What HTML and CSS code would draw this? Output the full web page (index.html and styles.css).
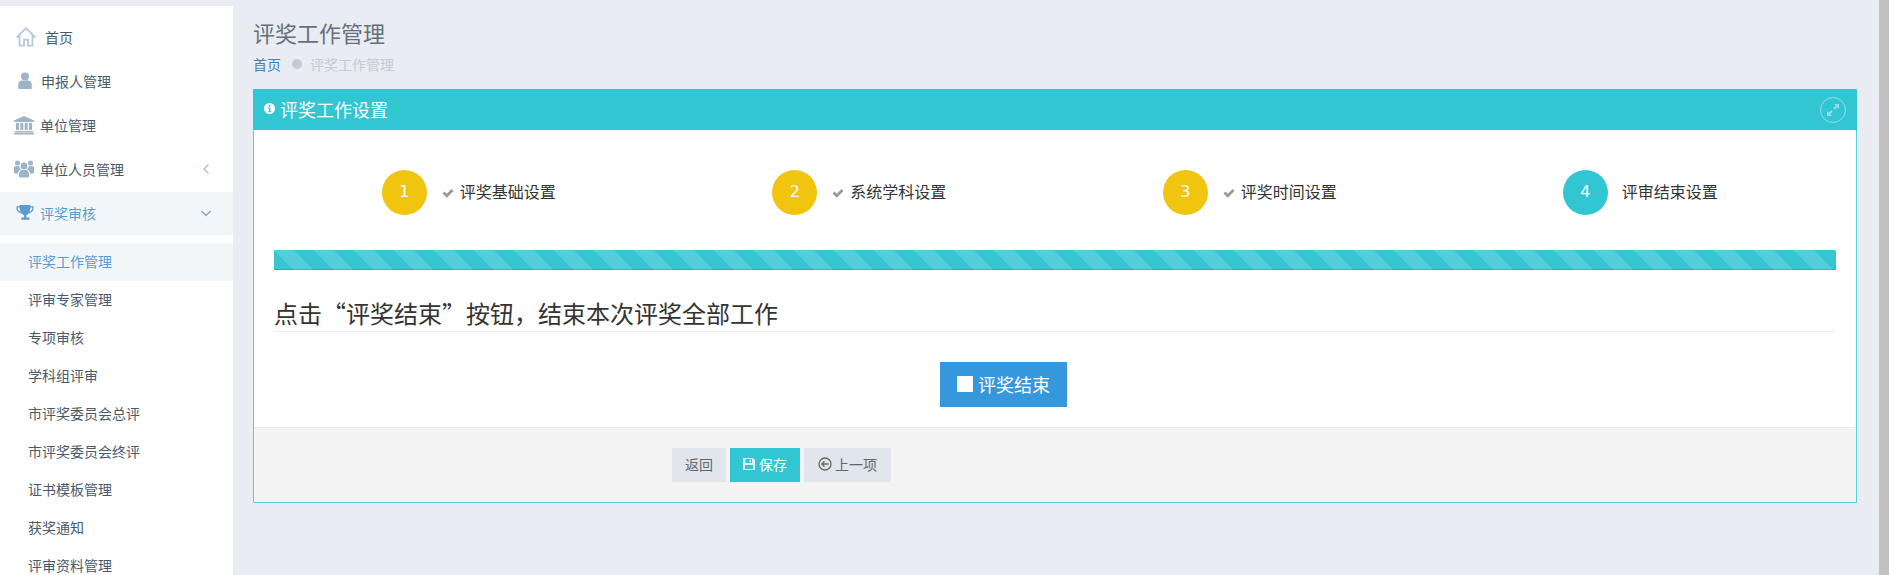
FILE: index.html
```html
<!DOCTYPE html>
<html lang="zh-CN">
<head>
    <meta charset="UTF-8">
    <title>评奖工作管理</title>
    <link rel="stylesheet" href="styles.css">
</head>
<body>
<div class="page">
    <aside class="sidebar">
        <a class="nav-item nav-home">
            <svg class="nav-icon" viewBox="0 0 20 20"><path d="M.7 10.500 10 1.200l9.300 9.300M3.500 8.500V18.700h4.500v-6h4v6h4.500V8.500" fill="none" stroke="#b4c9de" stroke-width="1.800"/></svg>
            <span>首页</span>
        </a>
        <a class="nav-item">
            <svg class="nav-icon icon-user" viewBox="0 0 20 20"><circle cx="10" cy="5" r="4.500" fill="#9db3c8"/><path d="M2.500 18v-4c0-3 2-4.500 4-4.500h7c2 0 4 1.500 4 4.500v4c0 .5-.5 1-1 1h-13c-.5 0-1-.5-1-1z" fill="#9db3c8"/></svg>
            <span>申报人管理</span>
        </a>
        <a class="nav-item">
            <svg class="nav-icon" viewBox="0 0 20 20"><path d="M10 1 0 5.500V7h20V5.500zM2 8h3v7H2zM6.300 8h3v7h-3zM10.700 8h3v7h-3zM15 8h3v7h-3zM1 16h18v1.500H1zM0 18h20v1.500H0z" fill="#9db3c8"/></svg>
            <span>单位管理</span>
        </a>
        <a class="nav-item">
            <svg class="nav-icon" viewBox="0 0 20 20"><circle cx="3.500" cy="4" r="2.500" fill="#9db3c8"/><circle cx="16.500" cy="4" r="2.500" fill="#9db3c8"/><circle cx="10" cy="7" r="3.500" fill="#9db3c8"/><path d="M0 8.500c0-1 1-1.500 2-1.500h3c.3 1.500 1 2.500 2 3.500-1.500.5-3 2-3 4H1c-.5 0-1-.5-1-1zM20 8.500c0-1-1-1.500-2-1.500h-3c-.3 1.500-1 2.500-2 3.500 1.500.5 3 2 3 4h3c.5 0 1-.5 1-1zM5 15c0-2 1.500-4 3-4h4c1.500 0 3 2 3 4v2c0 1-.5 1.500-1.500 1.500h-7C5.500 18.500 5 18 5 17z" fill="#9db3c8"/></svg>
            <span>单位人员管理</span>
            <svg class="nav-arrow" viewBox="0 0 14 14"><path d="M9.500 2.500 5 7l4.500 4.500" fill="none" stroke="#a7bdd2" stroke-width="1.300"/></svg>
        </a>
        <a class="nav-item active">
            <svg class="nav-icon icon-trophy" viewBox="0 0 20 20"><path d="M4 1h12v1.500h3.500V5c0 2.500-2.500 5-5.500 5.500-.7 1-1.500 1.500-2.500 2V15h2c1 0 1.500.7 1.500 1.500v1h-9v-1C5.500 15.700 6 15 7 15h2v-2.500c-1-.5-1.800-1-2.500-2C3 10 .5 7.500.5 5V2.500H4zM2 4v1c0 1.500 1.300 3 3 3.700C4.400 7.300 4 5.700 4 4zM18 4h-2c0 1.700-.4 3.300-1 4.700 1.700-.7 3-2.200 3-3.700z" fill="#5b9bd1"/></svg>
            <span>评奖审核</span>
            <svg class="nav-arrow" viewBox="0 0 14 14"><path d="M2.500 5 7 9.500 11.500 5" fill="none" stroke="#7ba7d0" stroke-width="1.300"/></svg>
        </a>
        <ul class="sub-nav">
            <li class="current">评奖工作管理</li>
            <li>评审专家管理</li>
            <li>专项审核</li>
            <li>学科组评审</li>
            <li>市评奖委员会总评</li>
            <li>市评奖委员会终评</li>
            <li>证书模板管理</li>
            <li>获奖通知</li>
            <li>评审资料管理</li>
        </ul>
    </aside>

    <main class="content">
        <h1 class="page-title">评奖工作管理</h1>
        <div class="breadcrumb">
            <a>首页</a>
            <i class="crumb-dot"></i>
            <span>评奖工作管理</span>
        </div>

        <section class="portlet">
            <header class="portlet-head">
                <div class="portlet-title">
                    <svg class="info-icon" viewBox="0 0 12 12"><circle cx="6" cy="6" r="6" fill="#fff"/><path d="M5 2h2v2H5zM4.500 5h2.500v4h1v1H4.500V9h1V6h-1z" fill="#32c5d2"/></svg>
                    <span>评奖工作设置</span>
                </div>
                <a class="expand-btn">
                    <svg viewBox="0 0 14 14"><path d="M8 1h5v5l-1.800-1.800-2.500 2.500-1.400-1.400 2.500-2.500zM6 13H1V8l1.800 1.800 2.500-2.500 1.400 1.400-2.500 2.500z" fill="#8fe0e8"/></svg>
                </a>
            </header>

            <div class="portlet-body">
                <div class="steps">
                    <div class="step">
                        <div class="step-num done">1</div>
                        <svg class="step-check" viewBox="0 0 12 12"><path d="M.5 6.500 2.500 4.500l2.300 2.300L9.500 2l2 2-6.700 6.700z" fill="#999"/></svg>
                        <span class="step-text">评奖基础设置</span>
                    </div>
                    <div class="step">
                        <div class="step-num done">2</div>
                        <svg class="step-check" viewBox="0 0 12 12"><path d="M.5 6.500 2.500 4.500l2.300 2.300L9.500 2l2 2-6.700 6.700z" fill="#999"/></svg>
                        <span class="step-text">系统学科设置</span>
                    </div>
                    <div class="step">
                        <div class="step-num done">3</div>
                        <svg class="step-check" viewBox="0 0 12 12"><path d="M.5 6.500 2.500 4.500l2.300 2.300L9.500 2l2 2-6.700 6.700z" fill="#999"/></svg>
                        <span class="step-text">评奖时间设置</span>
                    </div>
                    <div class="step">
                        <div class="step-num">4</div>
                        <span class="step-text step-label">评审结束设置</span>
                    </div>
                </div>

                <div class="progress"></div>

                <h3 class="block-title">点击“评奖结束”按钮，结束本次评奖全部工作</h3>

                <div class="finish-row">
                    <button class="btn-finish"><i class="stop-icon"></i>评奖结束</button>
                </div>
            </div>

            <footer class="portlet-foot">
                <button class="btn">返回</button>
                <button class="btn btn-save">
                    <svg class="btn-icon" viewBox="0 0 14 14"><path fill-rule="evenodd" d="M1 1h10l2 2v10H1zM3.500 2v4h6.500V2zM3 8v4h8V8z" fill="#d8f4f6"/><path d="M7.500 2.800h1.500v2.400H7.500z" fill="#d8f4f6"/></svg>
                    保存
                </button>
                <button class="btn btn-prev">
                    <svg class="btn-icon" viewBox="0 0 14 14"><circle cx="7" cy="7" r="6" fill="none" stroke="#666" stroke-width="1.300"/><path d="M10.500 7H4M6.500 4.300 3.800 7l2.700 2.700" fill="none" stroke="#666" stroke-width="1.300"/></svg>
                    上一项
                </button>
            </footer>
        </section>
    </main>

    <div class="scrollbar"></div>
</div>
</body>
</html>
```

FILE: styles.css
```css
* {
    box-sizing: border-box;
}

html, body {
    height: 100%;
    margin: 0;
    overflow: hidden;
}

body {
    background: #e9ecf3;
    font-family: "Noto Sans CJK SC", "Open Sans", sans-serif;
    font-size: 14px;
    color: #333;
}

.page {
    display: flex;
    height: 575px;
}

/* sidebar */
.sidebar {
    width: 233px;
    flex-shrink: 0;
    margin-top: 6px;
    padding-top: 10px;
    background: #fff;
    overflow: hidden;
}

.nav-item {
    display: flex;
    align-items: center;
    height: 44px;
    padding: 0 20px 2px 14px;
    color: #485a6a;
    line-height: 20px;
}

.nav-icon {
    width: 20px;
    height: 20px;
    margin-right: 6px;
    flex-shrink: 0;
}

.nav-home .nav-icon {
    margin: 0 9px 0 2px;
}

.nav-icon.icon-user {
    width: 18px;
    height: 18px;
    margin: 0 7px 0 2px;
}

.nav-icon.icon-trophy {
    width: 18px;
    height: 18px;
    margin: 0 6px 0 2px;
}

.nav-arrow {
    width: 14px;
    height: 14px;
    margin-left: auto;
}

.nav-item.active {
    height: 43px;
    background: #f2f6f9;
    color: #5b9bd1;
}

.sub-nav {
    list-style: none;
    margin: 8px 0 0;
    padding: 0;
}

.sub-nav li {
    height: 38px;
    padding-left: 28px;
    line-height: 36px;
    color: #485a6a;
}

.sub-nav li.current {
    background: #f2f6f9;
    color: #5b9bd1;
}

/* main area */
.content {
    flex: 1;
    min-width: 0;
    padding: 0 22px 0 20px;
}

.page-title {
    margin: 0;
    padding-top: 17px;
    font-size: 22px;
    font-weight: 400;
    line-height: 30px;
    color: #666f7a;
}

.breadcrumb {
    display: flex;
    align-items: center;
    height: 20px;
    margin-top: 7px;
    font-size: 14px;
    color: #c6cad2;
}

.breadcrumb a {
    color: #4a7fb5;
}

.crumb-dot {
    width: 10px;
    height: 10px;
    flex-shrink: 0;
    margin: 0 8px 0 11px;
    border-radius: 50%;
    background: #c5cad5;
}

.portlet {
    margin-top: 15px;
    border: 1px solid #4fd3df;
    border-top: 0;
    background: #fff;
}

.portlet-head {
    display: flex;
    align-items: center;
    justify-content: space-between;
    height: 41px;
    margin: 0 -1px;
    padding: 0 11px 0 11px;
    background: #32c5d2;
    color: #fff;
}

.portlet-title {
    display: flex;
    align-items: center;
    padding-bottom: 2px;
    font-size: 18px;
}

.info-icon {
    width: 11px;
    height: 11px;
    margin-right: 5px;
}

.expand-btn {
    display: flex;
    align-items: center;
    justify-content: center;
    width: 26px;
    height: 26px;
    border: 1px solid #8fe0e8;
    border-radius: 50%;
}

.expand-btn svg {
    width: 14px;
    height: 14px;
}

.portlet-body {
    padding: 0 20px;
}

.steps {
    display: grid;
    grid-template-columns: repeat(4, 1fr);
    padding-top: 40px;
}

.step {
    display: flex;
    align-items: center;
    justify-content: center;
    height: 45px;
    padding-right: 1px;
    font-size: 16px;
}

.step-text {
    padding-bottom: 4px;
}

.step-num {
    width: 45px;
    height: 45px;
    border-radius: 50%;
    background: #32c5d2;
    color: #fff;
    font-family: "DejaVu Sans", sans-serif;
    font-size: 16px;
    line-height: 43px;
    text-align: center;
}

.step-num.done {
    background: #f1c40f;
}

.step-check {
    width: 12px;
    height: 12px;
    margin: 0 6px 0 15px;
}

.step-label {
    margin-left: 14px;
}

.progress {
    height: 20px;
    margin-top: 35px;
    background-color: #36c6d3;
    background-image: linear-gradient(45deg, rgba(255, 255, 255, .15) 25%, transparent 25%, transparent 50%, rgba(255, 255, 255, .15) 50%, rgba(255, 255, 255, .15) 75%, transparent 75%, transparent);
    background-size: 40px 40px;
    box-shadow: inset 0 -1px 0 rgba(0, 0, 0, .15);
}

.block-title {
    height: 42px;
    margin: 20px 0 0;
    padding-top: 5px;
    border-bottom: 1px solid #eee;
    font-size: 24px;
    font-weight: 400;
    line-height: 36px;
    color: #333;
}

.finish-row {
    display: flex;
    justify-content: center;
    padding: 30px 103px 20px 0;
}

.btn-finish {
    display: flex;
    align-items: center;
    justify-content: center;
    width: 127px;
    height: 45px;
    padding: 0 0 2px;
    border: 0;
    background: #3598dc;
    color: #fff;
    font-family: inherit;
    font-size: 18px;
}

.stop-icon {
    width: 16px;
    height: 16px;
    margin-right: 5px;
    background: #fff;
    border-radius: 1px;
}

.portlet-foot {
    display: flex;
    gap: 4px;
    height: 75px;
    padding: 20px 0 0 418px;
    border-top: 1px solid #e7ecf1;
    background: #f4f4f4;
}

.btn {
    display: flex;
    align-items: center;
    height: 34px;
    padding: 0 13px 2px;
    border: 0;
    background: #e1e5ec;
    color: #666;
    font-family: inherit;
    font-size: 14px;
}

.btn-save {
    padding-left: 12px;
    background: #32c5d2;
    color: #fff;
}

.btn-prev {
    padding-right: 14px;
    padding-left: 14px;
}

.btn-icon {
    width: 14px;
    height: 14px;
    margin-right: 3px;
}

.scrollbar {
    width: 10px;
    flex-shrink: 0;
    background: #c1c1c1;
}
```
